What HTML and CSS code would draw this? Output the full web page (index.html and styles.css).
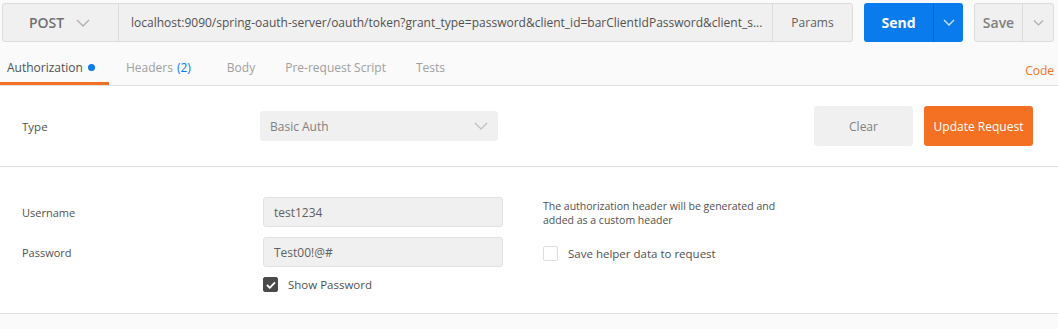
FILE: index.html
```html
<!DOCTYPE html>
<html lang="en">
<head>
    <meta charset="UTF-8">
    <title>Postman - Authorization</title>
    <link rel="stylesheet" href="styles.css">
</head>
<body>
    <!-- request bar -->
    <div class="request-bar">
        <div class="url-group">
            <div class="method">
                <span>POST</span>
                <svg class="chev" width="14" height="8" viewBox="0 0 14 8"><path d="M1 1l6 6 6-6" fill="none" stroke="#b0b0b0" stroke-width="1.3"/></svg>
            </div>
            <div class="url">localhost:9090/spring-oauth-server/oauth/token?grant_type=password&amp;client_id=barClientIdPassword&amp;client_s...</div>
            <div class="params">Params</div>
        </div>
        <div class="send-btn">
            <span class="send-label">Send</span>
            <span class="send-caret"><svg width="12" height="7" viewBox="0 0 12 7"><path d="M1 1l5 5 5-5" fill="none" stroke="#cfe3fb" stroke-width="1.3"/></svg></span>
        </div>
        <div class="save-btn">
            <span class="save-label">Save</span>
            <span class="save-caret"><svg width="11" height="6" viewBox="0 0 11 6"><path d="M1 .5l4.5 4.5 4.5-4.5" fill="none" stroke="#aaa" stroke-width="1.1"/></svg></span>
        </div>
    </div>

    <!-- tabs -->
    <div class="tabs">
        <div class="tab active">Authorization <span class="dot"></span></div>
        <div class="tab headers">Headers <span class="count">(2)</span></div>
        <div class="tab">Body</div>
        <div class="tab">Pre-request Script</div>
        <div class="tab">Tests</div>
        <div class="code-link">Code</div>
    </div>

    <!-- type row -->
    <div class="type-row">
        <div class="type-label">Type</div>
        <div class="select">
            <span>Basic Auth</span>
            <svg width="14" height="8" viewBox="0 0 14 8"><path d="M1 1l6 6 6-6" fill="none" stroke="#bdbdbd" stroke-width="1.2"/></svg>
        </div>
        <div class="type-actions">
            <div class="btn-clear">Clear</div>
            <div class="btn-update">Update Request</div>
        </div>
    </div>

    <!-- credentials -->
    <div class="auth-body">
        <div class="fields">
            <div class="field-row">
                <label class="field-label">Username</label>
                <div class="field-input">test1234</div>
            </div>
            <div class="field-row">
                <label class="field-label">Password</label>
                <div class="field-input">Test00!@#</div>
            </div>
            <div class="field-row show-row">
                <span class="field-label"></span>
                <span class="checkbox checked">
                    <svg width="10" height="8" viewBox="0 0 10 8"><path d="M1 4l2.8 2.8L9 1.3" fill="none" stroke="#fff" stroke-width="1.8"/></svg>
                </span>
                <span class="check-text">Show Password</span>
            </div>
        </div>
        <div class="helper">
            <p>The authorization header will be generated and<br>added as a custom header</p>
            <div class="helper-check">
                <span class="checkbox"></span>
                <span class="check-text">Save helper data to request</span>
            </div>
        </div>
    </div>
</body>
</html>
```

FILE: styles.css
```css
:root {
    --bg: #fafafa;
    --box: #f0f0f0;
    --line: #dcdcdc;
    --text: #505050;
    --muted: #808080;
    --blue: #097bed;
    --orange: #f47023;
}

* {
    box-sizing: border-box;
    margin: 0;
    padding: 0;
}

body {
    font-family: 'Open Sans', sans-serif;
    font-size: 12px;
    color: var(--text);
    background: var(--bg);
}

/* request bar */
.request-bar {
    display: flex;
    padding: 3px 4px 0 2px;
    height: 42px;
}

.url-group {
    flex: 1;
    display: flex;
    background: var(--box);
    border: 1px solid var(--line);
    border-radius: 3px;
}

.method {
    width: 116px;
    display: flex;
    align-items: center;
    justify-content: center;
    gap: 12px;
    border-right: 1px solid var(--line);
    font-size: 14px;
    font-weight: 600;
    color: #707070;
    padding-right: 2px;
}

.url {
    flex: 1;
    display: flex;
    align-items: center;
    padding-left: 12px;
    color: #505050;
    white-space: nowrap;
    overflow: hidden;
}

.params {
    width: 80px;
    display: flex;
    align-items: center;
    justify-content: center;
    border-left: 1px solid var(--line);
    color: #606060;
}

.send-btn {
    display: flex;
    margin-left: 11px;
    width: 99px;
    background: var(--blue);
    border-radius: 3px;
    color: #fff;
}

.send-label {
    width: 70px;
    display: flex;
    align-items: center;
    justify-content: center;
    font-size: 14px;
    font-weight: 700;
    border-right: 1px solid #0a68c9;
}

.send-caret,
.save-caret {
    flex: 1;
    display: flex;
    align-items: center;
    justify-content: center;
}

.save-btn {
    display: flex;
    margin-left: 11px;
    width: 80px;
    background: var(--box);
    border: 1px solid var(--line);
    border-radius: 3px;
}

.save-label {
    width: 48px;
    display: flex;
    align-items: center;
    justify-content: center;
    font-size: 14px;
    font-weight: 600;
    color: #808080;
    border-right: 1px solid var(--line);
}

/* tabs */
.tabs {
    display: flex;
    align-items: stretch;
    height: 44px;
    padding-top: 3px;
    border-bottom: 1px solid #e0e0e0;
}

.tab {
    display: flex;
    align-items: center;
    padding: 7px 15px 0;
    color: #a0a0a0;
    border-bottom: 3px solid transparent;
}

.tab.active {
    padding: 7px 14px 0 7px;
    color: var(--text);
    border-bottom-color: var(--orange);
}

.tab.headers {
    padding-left: 17px;
    padding-right: 21px;
}

.dot {
    display: inline-block;
    width: 7px;
    height: 7px;
    border-radius: 50%;
    background: var(--blue);
    margin-left: 5px;
}

.count {
    color: var(--blue);
    margin-left: 4px;
}

.code-link {
    margin-left: auto;
    display: flex;
    align-items: center;
    padding: 11px 4px 0 0;
    color: var(--orange);
}

/* type row */
.type-row {
    display: flex;
    align-items: center;
    height: 81px;
    background: #fff;
    border-bottom: 1px solid #e0e0e0;
    padding: 0 25px 0 22px;
}

.type-label {
    width: 238px;
    font-size: 11.5px;
}

.select {
    width: 238px;
    height: 30px;
    background: var(--box);
    border-radius: 3px;
    display: flex;
    align-items: center;
    justify-content: space-between;
    padding: 0 10px;
    color: var(--muted);
}

.type-actions {
    margin-left: auto;
    display: flex;
    gap: 11px;
}

.btn-clear,
.btn-update {
    height: 40px;
    display: flex;
    align-items: center;
    justify-content: center;
    border-radius: 3px;
}

.btn-clear {
    width: 99px;
    background: var(--box);
    color: var(--muted);
}

.btn-update {
    width: 109px;
    background: var(--orange);
    color: #fff;
    font-weight: 500;
}

/* credentials */
.auth-body {
    display: flex;
    background: #fff;
    height: 147px;
    border-bottom: 1px solid #e0e0e0;
    padding: 30px 0 0 22px;
}

.fields {
    display: flex;
    flex-direction: column;
    gap: 10px;
}

.field-row {
    display: flex;
    align-items: center;
}

.field-label {
    width: 241px;
    font-size: 11px;
}

.field-input {
    width: 240px;
    height: 30px;
    background: var(--box);
    border: 1px solid #e3e3e3;
    border-radius: 3px;
    display: flex;
    align-items: center;
    padding-left: 10px;
    color: #606060;
}

.checkbox {
    width: 15px;
    height: 15px;
    border: 1px solid #dedede;
    border-radius: 2px;
    display: inline-flex;
    align-items: center;
    justify-content: center;
    background: #fff;
}

.checkbox.checked {
    background: #4a4a4a;
    border-color: #4a4a4a;
}

.check-text {
    margin-left: 10px;
    font-size: 11.5px;
}

.helper {
    margin-left: 40px;
    padding-top: 2px;
}

.helper p {
    font-size: 10.5px;
    line-height: 14px;
}

.helper-check {
    display: flex;
    align-items: center;
    margin-top: 19px;
}
```
